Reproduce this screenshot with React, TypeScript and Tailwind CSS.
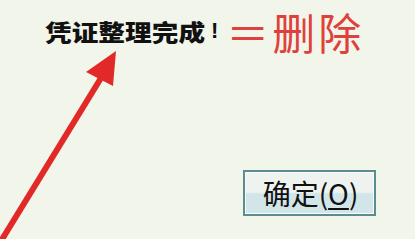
import React from "react";

export default function App() {
  return (
    <div className="relative w-[415px] h-[239px] overflow-hidden bg-[#f2f5ea] flex flex-col">
      <div className="flex items-center pl-[45px] h-[62px] shrink-0">
        <span
          className="inline-block w-[160px] text-[23px] leading-none font-black text-[#111] whitespace-nowrap origin-left scale-x-[1.16]"
          style={{ fontFamily: '"Noto Sans CJK SC", sans-serif' }}
        >
          凭证整理完成
        </span>
        <span
          className="text-[22px] leading-none font-bold text-[#111] ml-[6px]"
          style={{ fontFamily: '"Liberation Sans", sans-serif' }}
        >
          !
        </span>
        <span
          className="ml-[8px] text-[43px] leading-none font-normal text-[#e0403c] tracking-[3px] whitespace-nowrap"
          style={{ fontFamily: '"Noto Sans CJK SC", sans-serif' }}
        >
          ＝删除
        </span>
      </div>

      <div className="flex justify-end pr-[39px] mt-[108px]">
        <button className="w-[133px] h-[46px] border-2 border-[#5b8c92] p-0 bg-[#f7fbfa]">
          <div className="w-full h-full border border-[#f7fbfa] bg-[linear-gradient(to_bottom,#eef3f0_0%,#eef3f0_48%,#d2e6ea_52%,#d2e6ea_100%)] flex items-center justify-center">
            <span
              className="text-[28px] leading-none text-[#111] pl-[2px] whitespace-nowrap"
              style={{ fontFamily: '"Noto Sans CJK SC", sans-serif' }}
            >
              确定(<span className="underline decoration-[2px] underline-offset-[3px]">O</span>)
            </span>
          </div>
        </button>
      </div>

      <svg className="absolute left-0 top-0" width="415" height="239" viewBox="0 0 415 239">
        <line x1="1" y1="241" x2="101" y2="78" stroke="#e12a27" strokeWidth="6" />
        <polygon points="116,51 86,72 113,86" fill="#e12a27" />
      </svg>
    </div>
  );
}
